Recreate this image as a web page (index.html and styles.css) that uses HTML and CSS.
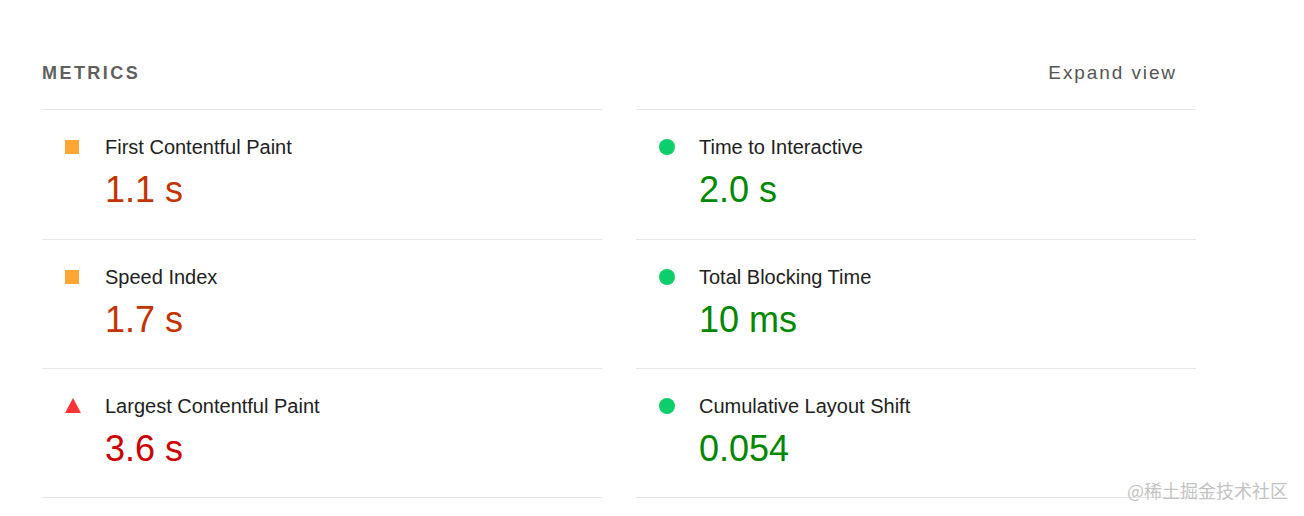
FILE: index.html
```html
<!DOCTYPE html>
<html>
<head>
<meta charset="utf-8">
<link rel="stylesheet" href="styles.css">
</head>
<body>
<div class="page">
  <section class="metrics">
    <header class="metrics-header">
      <h2 class="metrics-title">METRICS</h2>
      <span class="expand">Expand view</span>
    </header>
    <div class="grid">
      <div class="metric">
        <div class="metric-name"><span class="icon square"></span>First Contentful Paint</div>
        <div class="metric-value average">1.1&nbsp;s</div>
      </div>
      <div class="metric">
        <div class="metric-name"><span class="icon circle"></span>Time to Interactive</div>
        <div class="metric-value pass">2.0&nbsp;s</div>
      </div>
      <div class="metric">
        <div class="metric-name"><span class="icon square"></span>Speed Index</div>
        <div class="metric-value average">1.7&nbsp;s</div>
      </div>
      <div class="metric">
        <div class="metric-name"><span class="icon circle"></span>Total Blocking Time</div>
        <div class="metric-value pass">10&nbsp;ms</div>
      </div>
      <div class="metric">
        <div class="metric-name"><span class="icon triangle"></span>Largest Contentful Paint</div>
        <div class="metric-value fail">3.6&nbsp;s</div>
      </div>
      <div class="metric">
        <div class="metric-name"><span class="icon circle"></span>Cumulative Layout Shift</div>
        <div class="metric-value pass">0.054</div>
      </div>
    </div>
  </section>
  <div class="watermark">@稀土掘金技术社区</div>
</div>
</body>
</html>
```
FILE: styles.css
```css
html, body {
  margin: 0;
  padding: 0;
  background: #fff;
}
body {
  font-family: "Liberation Sans", Arial, sans-serif;
  color: #212121;
}
.page {
  position: relative;
  width: 1304px;
  height: 516px;
  overflow: hidden;
}
.metrics {
  width: 1154px;
  margin-left: 42px;
}
.metrics-header {
  display: flex;
  align-items: center;
  justify-content: space-between;
  height: 109px;
  padding-top: 37px;
  box-sizing: border-box;
  padding-right: 19px;
}
.metrics-title {
  margin: 0;
  font-size: 18px;
  font-weight: bold;
  letter-spacing: 2.45px;
  color: #5f5f5f;
}
.expand {
  font-size: 19px;
  letter-spacing: 1.9px;
  color: #555;
}
.grid {
  display: grid;
  grid-template-columns: 560px 560px;
  column-gap: 34px;
}
.metric {
  border-top: 1px solid #e6e6e6;
  padding: 25px 0 0 0;
  height: 129px;
  box-sizing: border-box;
}
.grid .metric:nth-child(-n+2) {
  height: 130px;
}
.grid .metric:nth-last-child(-n+2) {
  border-bottom: 1px solid #e6e6e6;
  height: 130px;
}
.metric-name {
  display: flex;
  align-items: center;
  height: 24px;
  font-size: 20px;
  color: #212121;
}
.icon {
  display: inline-block;
  width: 63px;
  height: 14px;
  position: relative;
  flex: none;
}
.icon::before {
  content: "";
  position: absolute;
  left: 23px;
  top: 0;
}
.square::before {
  width: 14px;
  height: 14px;
  background: #ffa534;
}
.circle::before {
  left: 23px;
  top: -1px;
  width: 16px;
  height: 16px;
  border-radius: 50%;
  background: #0cce6b;
}
.triangle::before {
  left: 23px;
  top: -1px;
  width: 0;
  height: 0;
  border-left: 8px solid transparent;
  border-right: 8px solid transparent;
  border-bottom: 15px solid #ff3333;
}
.metric-value {
  margin-top: 11px;
  margin-left: 63px;
  font-size: 36px;
  line-height: 40px;
}
.average { color: #c33300; }
.pass { color: #008800; }
.fail { color: #cc0000; }
.watermark {
  position: absolute;
  left: 1127px;
  top: 477px;
  font-family: "Noto Sans CJK SC", sans-serif;
  font-size: 18px;
  line-height: 26px;
  color: #c3c3c3;
  letter-spacing: 0;
}
```
